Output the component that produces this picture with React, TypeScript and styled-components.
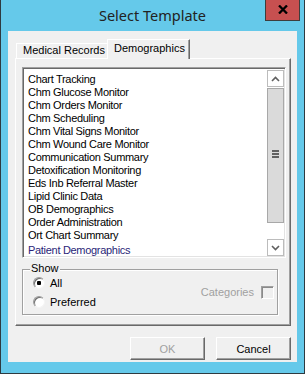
import React from 'react';
import styled, { createGlobalStyle } from "styled-components";

const templates = [
    "Chart Tracking",
    "Chm Glucose Monitor",
    "Chm Orders Monitor",
    "Chm Scheduling",
    "Chm Vital Signs Monitor",
    "Chm Wound Care Monitor",
    "Communication Summary",
    "Detoxification Monitoring",
    "Eds Inb Referral Master",
    "Lipid Clinic Data",
    "OB Demographics",
    "Order Administration",
    "Ort Chart Summary",
    "Patient Demographics",
];

const GlobalStyle = createGlobalStyle`
    html, body {
        margin: 0;
        padding: 0;
        background: #ffffff;
    }
    body {
        font-family: "Liberation Sans", Arial, sans-serif;
        font-size: 11px;
        color: #000000;
    }
    * {
        box-sizing: border-box;
    }
`

const Chevron = ({ up }: { up?: boolean }) => (
    <svg width="9" height="6" viewBox="0 0 9 6">
        <polyline
            points={up ? "1,5 4.5,1.5 8,5" : "1,1 4.5,4.5 8,1"}
            fill="none"
            stroke="#606060"
            strokeWidth="1.6"
        />
    </svg>
);

export default function App() {
    return (
        <>
            <GlobalStyle/>
            <Window>
                <TitleBar>
                    <span/>
                    <Title>Select Template</Title>
                    <CloseButton>
                        <svg width="10" height="9" viewBox="0 0 10 9">
                            <path d="M1 0.5 L9 8.5 M9 0.5 L1 8.5" stroke="#000" strokeWidth="2.3"/>
                        </svg>
                    </CloseButton>
                </TitleBar>
                <Client>
                    <TabStrip>
                        <Tab>Medical Records</Tab>
                        <Tab $active>Demographics</Tab>
                    </TabStrip>
                    <Panel>
                        <ListBox>
                            <Items>
                                {templates.map((t, i) => (
                                    <Item key={t} $accent={i === templates.length - 1}>{t}</Item>
                                ))}
                            </Items>
                            <ScrollBar>
                                <ScrollButton><Chevron up/></ScrollButton>
                                <Thumb>
                                    <Grip/>
                                    <Grip/>
                                    <Grip/>
                                </Thumb>
                                <Track/>
                                <ScrollButton><Chevron/></ScrollButton>
                            </ScrollBar>
                        </ListBox>
                        <GroupBox>
                            <Legend>Show</Legend>
                            <RadioList>
                                <RadioRow>
                                    <Radio $checked/>
                                    <span>All</span>
                                </RadioRow>
                                <RadioRow>
                                    <Radio/>
                                    <span>Preferred</span>
                                </RadioRow>
                            </RadioList>
                            <Categories>
                                <span>Categories</span>
                                <CheckBox/>
                            </Categories>
                        </GroupBox>
                    </Panel>
                    <ButtonRow>
                        <Button disabled>OK</Button>
                        <Button>Cancel</Button>
                    </ButtonRow>
                </Client>
            </Window>
        </>
    );
}

const Window = styled.div`
    width: 305px;
    height: 374px;
    background-color: #65c9ea;
    border: 1px solid #2e3a40;
    border-top: none;
    display: flex;
    flex-direction: column;
`

const TitleBar = styled.div`
    height: 31px;
    display: grid;
    grid-template-columns: 1fr auto 1fr;
`

const Title = styled.div`
    font-family: "Noto Sans", "Open Sans", sans-serif;
    font-size: 14.5px;
    color: #222222;
    line-height: 30px;
    white-space: nowrap;
`

const CloseButton = styled.div`
    justify-self: end;
    align-self: start;
    width: 35px;
    height: 21px;
    margin-right: 4px;
    background-color: #c75050;
    border: 1px solid #3d3d3d;
    border-top: none;
    display: flex;
    align-items: center;
    justify-content: center;
    padding-bottom: 1px;
`

const Client = styled.div`
    margin: 0 7px;
    height: 331px;
    background-color: #f0f0f0;
    padding: 8px 6px 0 7px;
    display: flex;
    flex-direction: column;
`

const TabStrip = styled.div`
    display: flex;
    align-items: flex-end;
    height: 19px;
    margin-left: 1px;
`

const Tab = styled.div<{ $active?: boolean }>`
    position: relative;
    z-index: 1;
    background-color: #f0f0f0;
    border-top: 1px solid #ffffff;
    border-left: 1px solid #ffffff;
    padding: 0 6px;
    white-space: nowrap;
    width: ${p => p.$active ? "83px" : "91px"};
    height: ${p => p.$active ? "20px" : "15px"};
    margin-bottom: ${p => p.$active ? "-1px" : "0"};
    line-height: ${p => p.$active ? "16px" : "13px"};
    border-right: ${p => p.$active ? "1px solid #696969" : "none"};
    box-shadow: ${p => p.$active ? "inset -1px 0 0 #a0a0a0" : "none"};
`

const Panel = styled.div`
    width: 276px;
    height: 268px;
    border-top: 1px solid #ffffff;
    border-left: 1px solid #ffffff;
    border-right: 1px solid #696969;
    border-bottom: 1px solid #696969;
    box-shadow: inset -1px -1px 0 #a0a0a0;
    padding: 8px 0 0 6px;
`

const ListBox = styled.div`
    width: 264px;
    height: 191px;
    background-color: #ffffff;
    border: 1px solid;
    border-color: #a0a0a0 #ffffff #ffffff #a0a0a0;
    box-shadow: inset 1px 1px 0 #696969, inset -1px -1px 0 #e3e3e3;
    padding: 2px 1px 1px 2px;
    display: flex;
`

const Items = styled.div`
    flex: 1;
    padding: 3px 0 0 3px;
`

const Item = styled.div<{ $accent?: boolean }>`
    height: 13px;
    line-height: 13px;
    white-space: nowrap;
    letter-spacing: -0.3px;
    margin-top: ${p => p.$accent ? "2px" : "0"};
    color: ${p => p.$accent ? "#2a1f78" : "#000000"};
`

const ScrollBar = styled.div`
    width: 17px;
    display: flex;
    flex-direction: column;
    background-color: #ffffff;
`

const ScrollButton = styled.div`
    height: 17px;
    border: 1px solid #bcbcbc;
    background-color: #ffffff;
    display: flex;
    align-items: center;
    justify-content: center;
`

const Thumb = styled.div`
    height: 135px;
    margin-top: 1px;
    background-color: #dadada;
    border: 1px solid #a8a8a8;
    display: flex;
    flex-direction: column;
    align-items: center;
    justify-content: center;
    gap: 1px;
    padding-bottom: 3px;
`

const Grip = styled.div`
    width: 7px;
    height: 2px;
    background-color: #606060;
`

const Track = styled.div`
    flex: 1;
`

const GroupBox = styled.div`
    position: relative;
    width: 256px;
    height: 46px;
    margin-top: 11px;
    border: 1px solid #a0a0a0;
    box-shadow: inset 1px 1px 0 #ffffff, 1px 1px 0 #ffffff;
    padding: 7px 3px 0 10px;
    display: flex;
    justify-content: space-between;
`

const Legend = styled.span`
    position: absolute;
    top: -8px;
    left: 7px;
    padding: 0 1px;
    line-height: 13px;
    background-color: #f0f0f0;
`

const RadioList = styled.div`
    display: flex;
    flex-direction: column;
    gap: 7px;
`

const RadioRow = styled.label`
    display: flex;
    align-items: center;
    gap: 5px;
    height: 12px;
    line-height: 13px;
`

const Radio = styled.span<{ $checked?: boolean }>`
    width: 12px;
    height: 12px;
    border-radius: 50%;
    border: 1px solid;
    border-color: #9a9a9a #f4f4f4 #f4f4f4 #9a9a9a;
    box-shadow: inset 1px 1px 0 #6e6e6e;
    background: ${p => p.$checked
        ? "radial-gradient(circle, #000 0 2px, #fff 2.5px)"
        : "#ffffff"};
`

const Categories = styled.div`
    align-self: center;
    margin-top: -7px;
    display: flex;
    align-items: center;
    gap: 7px;
    color: #a0a0a0;
`

const CheckBox = styled.span`
    width: 13px;
    height: 13px;
    border: 1px solid;
    border-color: #a0a0a0 #ffffff #ffffff #a0a0a0;
    box-shadow: inset 1px 1px 0 #8a8a8a;
    background-color: #f0f0f0;
`

const ButtonRow = styled.div`
    display: flex;
    justify-content: flex-end;
    gap: 11px;
    margin-top: 11px;
    width: 276px;
`

const Button = styled.button`
    width: 75px;
    height: 23px;
    padding: 0;
    font-family: "Liberation Sans", Arial, sans-serif;
    font-size: 11px;
    color: #000000;
    background-color: #f0f0f0;
    border: 1px solid;
    border-color: #ffffff #696969 #696969 #ffffff;
    box-shadow: inset -1px -1px 0 #a0a0a0;
    border-radius: 0;

    &:disabled {
        color: #a0a0a0;
    }
`
